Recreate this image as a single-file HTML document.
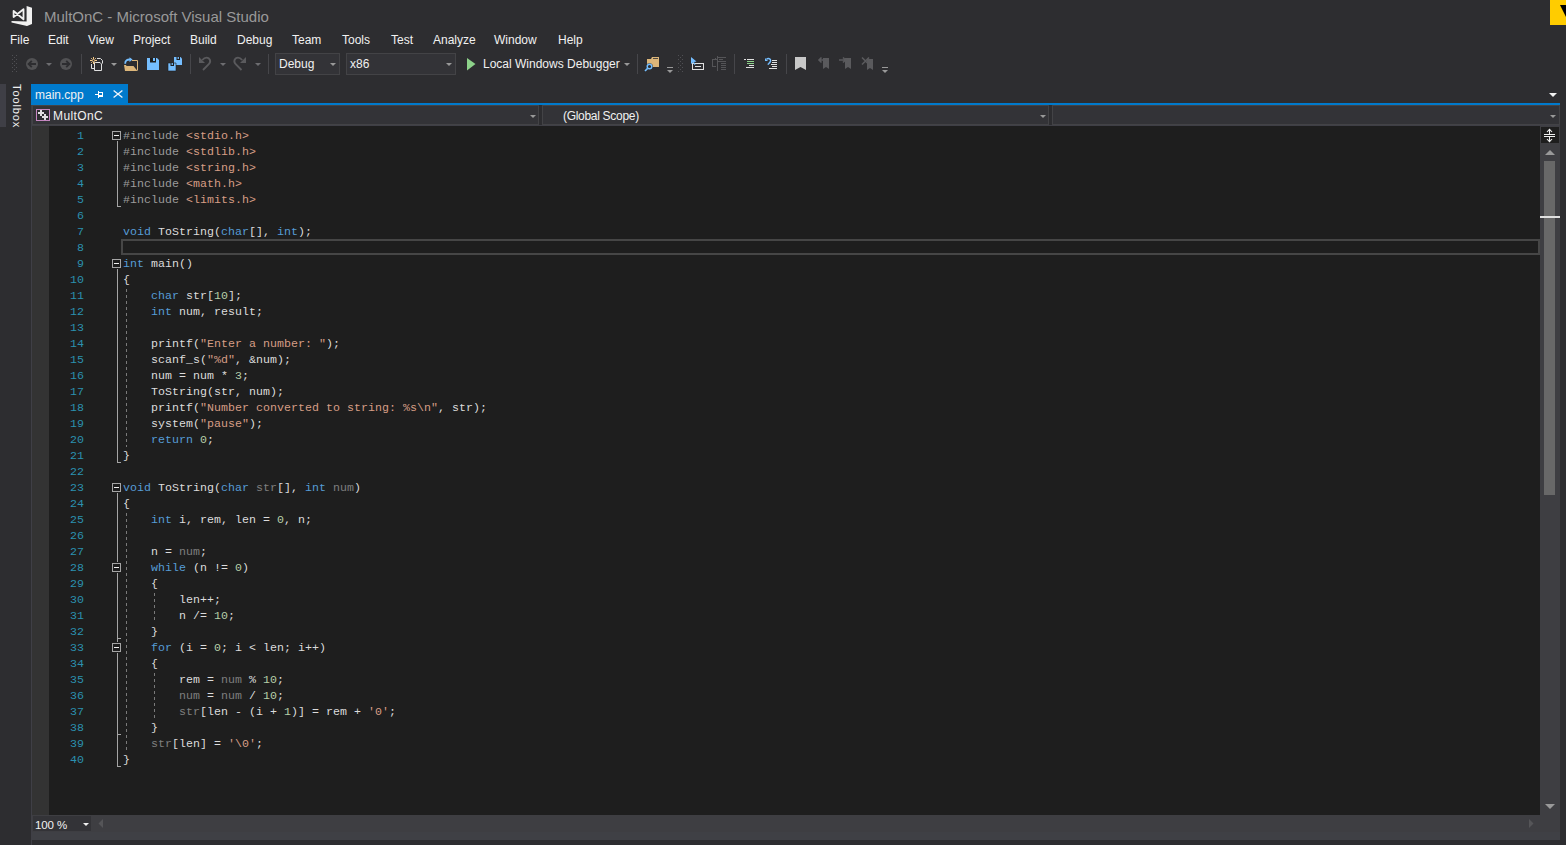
<!DOCTYPE html>
<html><head><meta charset="utf-8">
<style>
*{margin:0;padding:0;box-sizing:border-box}
html,body{width:1566px;height:845px;overflow:hidden;background:#2D2D30}
body{position:relative;font-family:"Liberation Sans",sans-serif;font-size:12px;color:#F1F1F1}
.a{position:absolute;white-space:pre}
#title{left:44px;top:7px;font-size:15px;color:#999999;line-height:20px}
.mi{top:31px;line-height:18px;font-size:12px;color:#F1F1F1}
.cb{position:absolute;background:#333337;border:1px solid #434346}
#editor{position:absolute;left:32px;top:126px;width:1508px;height:689px;background:#1E1E1E}
#margin{position:absolute;left:32px;top:126px;width:17px;height:689px;background:#333333}
.ln{position:absolute;margin-top:1px;left:49px;width:35px;text-align:right;font-family:"Liberation Mono",monospace;font-size:11.6px;letter-spacing:0.04px;color:#2B91AF;line-height:16px;height:16px}
.cl{position:absolute;margin-top:1px;left:123px;font-family:"Liberation Mono",monospace;font-size:11.6px;letter-spacing:0.04px;color:#DCDCDC;line-height:16px;height:16px;white-space:pre}
.k{color:#569CD6}.s{color:#D69D85}.n{color:#B5CEA8}.p{color:#9B9B9B}.g{color:#7F7F7F}
svg{position:absolute;left:0;top:0}
</style></head><body>
<div class="a" id="title">MultOnC - Microsoft Visual Studio</div>
<div class="a mi" style="left:10px">File</div>
<div class="a mi" style="left:48px">Edit</div>
<div class="a mi" style="left:88px">View</div>
<div class="a mi" style="left:133px">Project</div>
<div class="a mi" style="left:190px">Build</div>
<div class="a mi" style="left:237px">Debug</div>
<div class="a mi" style="left:292px">Team</div>
<div class="a mi" style="left:342px">Tools</div>
<div class="a mi" style="left:391px">Test</div>
<div class="a mi" style="left:433px">Analyze</div>
<div class="a mi" style="left:494px">Window</div>
<div class="a mi" style="left:558px">Help</div>

<div class="cb" style="left:275px;top:53px;width:65px;height:22px"></div>
<div class="cb" style="left:346px;top:53px;width:110px;height:22px"></div>
<div class="a" style="left:279px;top:56px;line-height:16px">Debug</div>
<div class="a" style="left:350px;top:56px;line-height:16px">x86</div>
<div class="a" style="left:483px;top:56px;line-height:16px">Local Windows Debugger</div>

<!-- toolbox strip -->
<div class="a" style="left:0;top:84px;width:6px;height:43px;background:#3F3F46"></div>
<div class="a" style="left:23px;top:84px;transform-origin:0 0;transform:rotate(90deg);line-height:12px;font-size:11px;letter-spacing:0.9px">Toolbox</div>

<!-- tab -->
<div class="a" style="left:31px;top:84px;width:97px;height:19px;background:#007ACC"></div>
<div class="a" style="left:31px;top:103px;width:1529px;height:2px;background:#007ACC"></div>
<div class="a" style="left:35px;top:88px;line-height:14px">main.cpp</div>

<!-- nav bar -->
<div class="a" style="left:31px;top:105px;width:1529px;height:21px;background:#2D2D30"></div>
<div class="cb" style="left:32px;top:105px;width:507px;height:20px"></div><div class="a" style="left:31px;top:125px;width:1529px;height:1px;background:#3F3F46"></div>
<div class="cb" style="left:542px;top:105px;width:507px;height:20px"></div>
<div class="cb" style="left:1052px;top:105px;width:508px;height:20px"></div>
<div class="a" style="left:53px;top:108px;line-height:16px;letter-spacing:0.4px">MultOnC</div>
<div class="a" style="left:563px;top:108px;line-height:16px;letter-spacing:-0.3px">(Global Scope)</div>

<!-- editor -->
<div class="a" style="left:31px;top:105px;width:1px;height:740px;background:#3F3F46"></div>
<div id="editor"></div>
<div id="margin"></div>

<!-- scrollbar -->
<div class="a" style="left:1540px;top:126px;width:20px;height:689px;background:#3E3E42"></div>
<div class="a" style="left:1541px;top:127px;width:18px;height:16px;background:#1E1E1E"></div>
<div class="a" style="left:1544px;top:161px;width:11px;height:334px;background:#686868"></div>
<div class="a" style="left:1540px;top:216px;width:20px;height:2px;background:#E0E0E0"></div>

<!-- bottom bar -->
<div class="a" style="left:32px;top:815px;width:1528px;height:25px;background:#3E3E42"></div>
<div class="a" style="left:32px;top:832px;width:1528px;height:8px;background:#3F4045"></div><div class="a" style="left:33px;top:816px;width:58px;height:15px;background:#333337"></div>
<div class="a" style="left:35px;top:818px;line-height:14px;font-size:11.5px;letter-spacing:-0.1px">100 %</div>

<!--icons--><svg width="1566" height="845" style="position:absolute;left:0;top:0">
<!-- VS logo -->
<g fill="#F1F1F1">
<polygon points="26.6,6 32,7.8 32,24 27,26 26.6,25.5"/>
<polygon points="11.5,21 27,21.6 27,26 11.5,22.4"/>
</g>
<path d="M13.6,11 L23.5,19.3 L23.5,9.2 L13.6,17 Z" fill="none" stroke="#F1F1F1" stroke-width="1.8" stroke-linejoin="round"/>
<!-- grip dots -->
<g fill="#505054">
<rect x="12" y="55" width="1" height="1"/><rect x="16" y="55" width="1" height="1"/>
<rect x="14" y="57" width="1" height="1"/>
<rect x="12" y="59" width="1" height="1"/><rect x="16" y="59" width="1" height="1"/>
<rect x="14" y="61" width="1" height="1"/>
<rect x="12" y="63" width="1" height="1"/><rect x="16" y="63" width="1" height="1"/>
<rect x="14" y="65" width="1" height="1"/>
<rect x="12" y="67" width="1" height="1"/><rect x="16" y="67" width="1" height="1"/>
<rect x="14" y="69" width="1" height="1"/>
<rect x="12" y="71" width="1" height="1"/><rect x="16" y="71" width="1" height="1"/>
<rect x="678" y="55" width="1" height="1"/><rect x="682" y="55" width="1" height="1"/>
<rect x="680" y="57" width="1" height="1"/>
<rect x="678" y="59" width="1" height="1"/><rect x="682" y="59" width="1" height="1"/>
<rect x="680" y="61" width="1" height="1"/>
<rect x="678" y="63" width="1" height="1"/><rect x="682" y="63" width="1" height="1"/>
<rect x="680" y="65" width="1" height="1"/>
<rect x="678" y="67" width="1" height="1"/><rect x="682" y="67" width="1" height="1"/>
<rect x="680" y="69" width="1" height="1"/>
<rect x="678" y="71" width="1" height="1"/><rect x="682" y="71" width="1" height="1"/>
</g>
<!-- back / forward -->
<circle cx="32" cy="64" r="6" fill="#525254"/>
<path d="M36,64 H29 M31.8,60.8 L28.6,64 L31.8,67.2" fill="none" stroke="#2D2D30" stroke-width="1.9"/>
<circle cx="66" cy="64" r="6" fill="#525254"/>
<path d="M62,64 H69 M66.2,60.8 L69.4,64 L66.2,67.2" fill="none" stroke="#2D2D30" stroke-width="1.9"/>
<g fill="#6D6D70">
<polygon points="46,63 52,63 49,66"/>
<polygon points="220,63 226,63 223,66"/>
<polygon points="255,63 261,63 258,66"/>
</g>
<!-- separators -->
<g fill="#46464A">
<rect x="81" y="54" width="1" height="20"/>
<rect x="190" y="54" width="1" height="20"/>
<rect x="268" y="54" width="1" height="20"/>
<rect x="637" y="54" width="1" height="20"/>
<rect x="734" y="54" width="1" height="20"/>
<rect x="786" y="54" width="1" height="20"/>
</g>
<!-- new project -->
<path d="M97,58.5 H100.5 L102.5,60.5 V63.5 M91.5,64 V68.5 H94" fill="none" stroke="#E0E0E0" stroke-width="1"/>
<path d="M94.5,62.5 H100 L101.5,64 V70.5 H94.5 Z" fill="#2D2D30" stroke="#E0E0E0" stroke-width="1"/>
<g stroke="#F5C987" stroke-width="1" fill="none">
<path d="M93.5,57 V59 M93.5,62 V64 M90,60.5 H92 M95,60.5 H97 M91.2,58.2 L92,59 M95.8,58.2 L95,59 M91.2,62.8 L92,62 M95.8,62.8 L95,62"/>
<circle cx="93.5" cy="60.5" r="1.2"/>
</g>
<polygon points="111,63 117,63 114,66" fill="#999999"/>
<!-- open folder -->
<path d="M132,60.5 H137.5 V70.5" fill="none" stroke="#DCB67A" stroke-width="1"/>
<polygon points="124,65 126,65 126.5,66 133.5,66 137.5,71 125,71" fill="#DCB67A"/>
<path d="M125.2,63.8 C125,60.5 127.5,59.2 130.5,59.6" fill="none" stroke="#75BEFF" stroke-width="1.8"/>
<polygon points="129.5,57.2 132.6,59.6 129.5,62" fill="#75BEFF"/>
<!-- save -->
<path d="M147,58 H157 L159,60 V70 H147 Z" fill="#75BEFF"/>
<rect x="150" y="58" width="6" height="4.5" fill="#1E1E1E"/>
<rect x="153" y="58" width="2" height="3" fill="#75BEFF"/>
<!-- save all -->
<path d="M174,57 H180.5 L182,58.5 V65 H174 Z" fill="#75BEFF"/>
<rect x="176.5" y="57" width="3.5" height="3" fill="#1E1E1E"/>
<rect x="177.6" y="57" width="1.3" height="2" fill="#75BEFF"/>
<path d="M168,63 H176 V71 H168 Z" fill="#75BEFF" stroke="#1E1E1E" stroke-width="0.6"/>
<rect x="170.5" y="63" width="3.5" height="3" fill="#1E1E1E"/>
<rect x="171.6" y="63" width="1.3" height="2" fill="#75BEFF"/>
<!-- undo / redo -->
<g fill="none" stroke="#5A5A5D" stroke-width="1.9">
<path d="M203,70 L208.8,64.2 C211.5,61.5 209.8,57.6 206.5,57.6 C204.8,57.6 203.5,58.6 202.3,60"/>
<path d="M241.5,70 L235.7,64.2 C233,61.5 234.7,57.6 238,57.6 C239.7,57.6 241,58.6 242.2,60"/>
</g>
<g fill="#5A5A5D">
<polygon points="199,57 199,63 205,63"/>
<polygon points="246,57 246,63 240,63"/>
</g>
<!-- combo arrows -->
<g fill="#999999">
<polygon points="330,63 336,63 333,66"/>
<polygon points="446,63 452,63 449,66"/>
<polygon points="624,63 630,63 627,66"/>
<polygon points="530,115 536,115 533,118"/>
<polygon points="1040,115 1046,115 1043,118"/>
<polygon points="1550,115 1556,115 1553,118"/>
</g>
<!-- play -->
<polygon points="467,58 475.5,64 467,70.5" fill="#8DD28A"/>
<!-- find in files -->
<path d="M647,59 H651 L652,57 H659 V67 H647 Z" fill="#DCB67A"/>
<rect x="653" y="58" width="5" height="1" fill="#2D2D30" opacity="0.8"/>
<circle cx="649.5" cy="66.5" r="3.3" fill="#2D2D30"/>
<circle cx="649.5" cy="66.5" r="2.3" fill="none" stroke="#75BEFF" stroke-width="1.4"/>
<path d="M647.6,68.4 L645,71" stroke="#75BEFF" stroke-width="1.6"/>
<!-- overflow 1 -->
<rect x="667" y="67" width="6" height="1" fill="#999999"/>
<polygon points="667,70 673,70 670,73" fill="#999999"/>
<rect x="882" y="67" width="6" height="1" fill="#999999"/>
<polygon points="882,70 888,70 885,73" fill="#999999"/>
<!-- select -->
<rect x="692.5" y="63.5" width="11" height="6" fill="#2D2D30" stroke="#E0E0E0" stroke-width="1"/>
<rect x="695" y="66" width="6" height="1" fill="#E0E0E0"/>
<polygon points="691,57 696.5,61.5 694,62 695.5,64.5 694.5,65 693,62.5 691,64" fill="#75BEFF"/>
<!-- disabled icon -->
<g fill="#555558">
<rect x="717" y="56" width="1" height="15"/>
<rect x="718" y="57" width="8" height="1"/>
<rect x="719" y="59" width="4" height="1"/>
<rect x="718" y="61" width="8" height="1"/>
<rect x="721" y="63" width="5" height="1"/>
<rect x="721" y="65" width="5" height="1"/>
<rect x="721" y="67" width="5" height="1"/>
<rect x="721" y="69" width="5" height="1"/>
<rect x="712" y="59" width="1" height="8"/>
<rect x="712" y="59" width="5" height="1"/>
<rect x="712" y="66" width="4" height="1"/>
<rect x="715" y="58" width="1" height="2"/>
</g>
<!-- comment -->
<g fill="#E0E0E0">
<rect x="744" y="59" width="2" height="1"/><rect x="747" y="59" width="7" height="1"/>
<rect x="749" y="65" width="5" height="1"/>
<rect x="746" y="67" width="8" height="1"/>
<rect x="772" y="60" width="5" height="1"/>
<rect x="772" y="62" width="5" height="1"/>
<rect x="771" y="64" width="6" height="1"/>
<rect x="772" y="66" width="5" height="1"/>
<rect x="769" y="68" width="8" height="1"/>
</g>
<g fill="#8DD28A">
<rect x="747" y="61" width="7" height="1"/><rect x="747" y="63" width="7" height="1"/>
</g>
<path d="M766.5,59.3 C768,58 771,58.5 770.6,61 C770.3,62.5 768.8,63.5 767.8,64.6" fill="none" stroke="#75BEFF" stroke-width="1.4"/>
<polygon points="765,58 765,61 768,61" fill="#75BEFF"/>
<!-- bookmarks -->
<polygon points="795,57 806,57 806,70 800.5,67 795,70" fill="#C8C8C8"/>
<g fill="#5A5A5D">
<polygon points="823,58 829,58 829,69 826,67 823,69"/>
<polygon points="845,58 851,58 851,69 848,67 845,69"/>
<polygon points="867,59 873,59 873,70 870,68 867,70"/>
</g>
<g fill="none" stroke="#5A5A5D" stroke-width="1.6">
<path d="M825,60 H819 M821.5,57.5 L819,60 L821.5,62.5"/>
<path d="M839,60 H845.5 M843,57.5 L845.5,60 L843,62.5"/>
<path d="M862,57.5 L869,64.5 M869,57.5 L862,64.5"/>
</g>
<!-- yellow feedback -->
<rect x="1550" y="0" width="16" height="25" fill="#FFCC00"/>
<polygon points="1560,5 1566,5 1566,17" fill="#000000"/>
<!-- tab dropdown -->
<polygon points="1549,93 1557,93 1553,97" fill="#F1F1F1"/>
</svg>
<!--endicons-->
<!--icons2--><svg width="1566" height="845" style="position:absolute;left:0;top:0">
<!-- tab pin -->
<g fill="#FFFFFF">
<rect x="95" y="94" width="3" height="1"/>
<rect x="98" y="91" width="1" height="7"/>
<rect x="99" y="92" width="4" height="1"/>
<rect x="99" y="95" width="4" height="2"/>
<rect x="102" y="92" width="1" height="5"/>
</g>
<path d="M113.6,90.4 L122.4,97.6 M122.4,90.4 L113.6,97.6" stroke="#EEF4FA" stroke-width="1.3"/>
<!-- project icon -->
<rect x="36.5" y="109.5" width="13" height="11" fill="#2D2D30" stroke="#C586C0" stroke-width="1"/>
<g fill="#E0E0E0">
<rect x="38" y="112" width="6" height="2"/>
<rect x="40" y="110" width="2" height="6"/>
<rect x="42" y="116" width="6" height="2"/>
<rect x="44" y="114" width="2" height="6"/>
</g>
<!-- split icon -->
<g fill="#F0F0F0">
<rect x="1544" y="134" width="11" height="1"/>
<rect x="1544" y="136" width="11" height="1"/>
<rect x="1549" y="129.5" width="1" height="4.5"/>
<rect x="1549" y="137" width="1" height="4.5"/>
</g>
<path d="M1547,132 L1549.5,129.3 L1552,132 M1547,139 L1549.5,141.7 L1552,139" fill="none" stroke="#F0F0F0" stroke-width="1.1"/>
<!-- scroll arrows -->
<g fill="#999999">
<polygon points="1545,155 1555,155 1550,150"/>
<polygon points="1545,804 1555,804 1550,809"/>
</g>
<g fill="#555558">
<polygon points="103,819 103,828 98.5,823.5"/>
<polygon points="1529,819 1529,828 1533.5,823.5"/>
</g>
<polygon points="83,823 89,823 86,826" fill="#F1F1F1"/>
</svg>
<!--endicons2-->
<div id="code"><div class="ln" style="top:127px">1</div>
<div class="cl" style="top:127px"><span class="p">#include</span> <span class="s">&lt;stdio.h&gt;</span></div>
<div class="ln" style="top:143px">2</div>
<div class="cl" style="top:143px"><span class="p">#include</span> <span class="s">&lt;stdlib.h&gt;</span></div>
<div class="ln" style="top:159px">3</div>
<div class="cl" style="top:159px"><span class="p">#include</span> <span class="s">&lt;string.h&gt;</span></div>
<div class="ln" style="top:175px">4</div>
<div class="cl" style="top:175px"><span class="p">#include</span> <span class="s">&lt;math.h&gt;</span></div>
<div class="ln" style="top:191px">5</div>
<div class="cl" style="top:191px"><span class="p">#include</span> <span class="s">&lt;limits.h&gt;</span></div>
<div class="ln" style="top:207px">6</div>
<div class="ln" style="top:223px">7</div>
<div class="cl" style="top:223px"><span class="k">void</span> ToString(<span class="k">char</span>[], <span class="k">int</span>);</div>
<div class="ln" style="top:239px">8</div>
<div class="ln" style="top:255px">9</div>
<div class="cl" style="top:255px"><span class="k">int</span> main()</div>
<div class="ln" style="top:271px">10</div>
<div class="cl" style="top:271px">{</div>
<div class="ln" style="top:287px">11</div>
<div class="cl" style="top:287px">    <span class="k">char</span> str[<span class="n">10</span>];</div>
<div class="ln" style="top:303px">12</div>
<div class="cl" style="top:303px">    <span class="k">int</span> num, result;</div>
<div class="ln" style="top:319px">13</div>
<div class="ln" style="top:335px">14</div>
<div class="cl" style="top:335px">    printf(<span class="s">"Enter a number: "</span>);</div>
<div class="ln" style="top:351px">15</div>
<div class="cl" style="top:351px">    scanf_s(<span class="s">"%d"</span>, &amp;num);</div>
<div class="ln" style="top:367px">16</div>
<div class="cl" style="top:367px">    num = num * <span class="n">3</span>;</div>
<div class="ln" style="top:383px">17</div>
<div class="cl" style="top:383px">    ToString(str, num);</div>
<div class="ln" style="top:399px">18</div>
<div class="cl" style="top:399px">    printf(<span class="s">"Number converted to string: %s\n"</span>, str);</div>
<div class="ln" style="top:415px">19</div>
<div class="cl" style="top:415px">    system(<span class="s">"pause"</span>);</div>
<div class="ln" style="top:431px">20</div>
<div class="cl" style="top:431px">    <span class="k">return</span> <span class="n">0</span>;</div>
<div class="ln" style="top:447px">21</div>
<div class="cl" style="top:447px">}</div>
<div class="ln" style="top:463px">22</div>
<div class="ln" style="top:479px">23</div>
<div class="cl" style="top:479px"><span class="k">void</span> ToString(<span class="k">char</span> <span class="g">str</span>[], <span class="k">int</span> <span class="g">num</span>)</div>
<div class="ln" style="top:495px">24</div>
<div class="cl" style="top:495px">{</div>
<div class="ln" style="top:511px">25</div>
<div class="cl" style="top:511px">    <span class="k">int</span> i, rem, len = <span class="n">0</span>, n;</div>
<div class="ln" style="top:527px">26</div>
<div class="ln" style="top:543px">27</div>
<div class="cl" style="top:543px">    n = <span class="g">num</span>;</div>
<div class="ln" style="top:559px">28</div>
<div class="cl" style="top:559px">    <span class="k">while</span> (n != <span class="n">0</span>)</div>
<div class="ln" style="top:575px">29</div>
<div class="cl" style="top:575px">    {</div>
<div class="ln" style="top:591px">30</div>
<div class="cl" style="top:591px">        len++;</div>
<div class="ln" style="top:607px">31</div>
<div class="cl" style="top:607px">        n /= <span class="n">10</span>;</div>
<div class="ln" style="top:623px">32</div>
<div class="cl" style="top:623px">    }</div>
<div class="ln" style="top:639px">33</div>
<div class="cl" style="top:639px">    <span class="k">for</span> (i = <span class="n">0</span>; i &lt; len; i++)</div>
<div class="ln" style="top:655px">34</div>
<div class="cl" style="top:655px">    {</div>
<div class="ln" style="top:671px">35</div>
<div class="cl" style="top:671px">        rem = <span class="g">num</span> % <span class="n">10</span>;</div>
<div class="ln" style="top:687px">36</div>
<div class="cl" style="top:687px">        <span class="g">num</span> = <span class="g">num</span> / <span class="n">10</span>;</div>
<div class="ln" style="top:703px">37</div>
<div class="cl" style="top:703px">        <span class="g">str</span>[len - (i + <span class="n">1</span>)] = rem + <span class="s">'0'</span>;</div>
<div class="ln" style="top:719px">38</div>
<div class="cl" style="top:719px">    }</div>
<div class="ln" style="top:735px">39</div>
<div class="cl" style="top:735px">    <span class="g">str</span>[len] = <span class="s">'\0'</span>;</div>
<div class="ln" style="top:751px">40</div>
<div class="cl" style="top:751px">}</div><svg width="1566" height="845" style="position:absolute;left:0;top:0"><rect x="112.5" y="131.5" width="8" height="8" fill="#1E1E1E" stroke="#A5A5A5" stroke-width="1"/><rect x="114" y="135" width="5" height="1" fill="#F0F0F0"/><rect x="117" y="141" width="1" height="66" fill="#A5A5A5"/><rect x="117" y="206" width="4" height="1" fill="#A5A5A5"/><rect x="112.5" y="259.5" width="8" height="8" fill="#1E1E1E" stroke="#A5A5A5" stroke-width="1"/><rect x="114" y="263" width="5" height="1" fill="#F0F0F0"/><rect x="117" y="269" width="1" height="194" fill="#A5A5A5"/><rect x="117" y="462" width="4" height="1" fill="#A5A5A5"/><rect x="112.5" y="483.5" width="8" height="8" fill="#1E1E1E" stroke="#A5A5A5" stroke-width="1"/><rect x="114" y="487" width="5" height="1" fill="#F0F0F0"/><rect x="117" y="493" width="1" height="69" fill="#A5A5A5"/><rect x="112.5" y="563.5" width="8" height="8" fill="#1E1E1E" stroke="#A5A5A5" stroke-width="1"/><rect x="114" y="567" width="5" height="1" fill="#F0F0F0"/><rect x="117" y="573" width="1" height="69" fill="#A5A5A5"/><rect x="117" y="638" width="4" height="1" fill="#A5A5A5"/><rect x="112.5" y="643.5" width="8" height="8" fill="#1E1E1E" stroke="#A5A5A5" stroke-width="1"/><rect x="114" y="647" width="5" height="1" fill="#F0F0F0"/><rect x="117" y="653" width="1" height="114" fill="#A5A5A5"/><rect x="117" y="734" width="4" height="1" fill="#A5A5A5"/><rect x="117" y="766" width="4" height="1" fill="#A5A5A5"/><line x1="126.5" y1="289" x2="126.5" y2="447" stroke="#7A7A7A" stroke-width="1" stroke-dasharray="3 3"/><line x1="126.5" y1="513" x2="126.5" y2="751" stroke="#7A7A7A" stroke-width="1" stroke-dasharray="3 3"/><line x1="154.5" y1="593" x2="154.5" y2="623" stroke="#7A7A7A" stroke-width="1" stroke-dasharray="3 3"/><line x1="154.5" y1="673" x2="154.5" y2="719" stroke="#7A7A7A" stroke-width="1" stroke-dasharray="3 3"/><rect x="122" y="240" width="1417" height="14" fill="none" stroke="#464646" stroke-width="2"/></svg></div><!--endcode-->
</body></html>
